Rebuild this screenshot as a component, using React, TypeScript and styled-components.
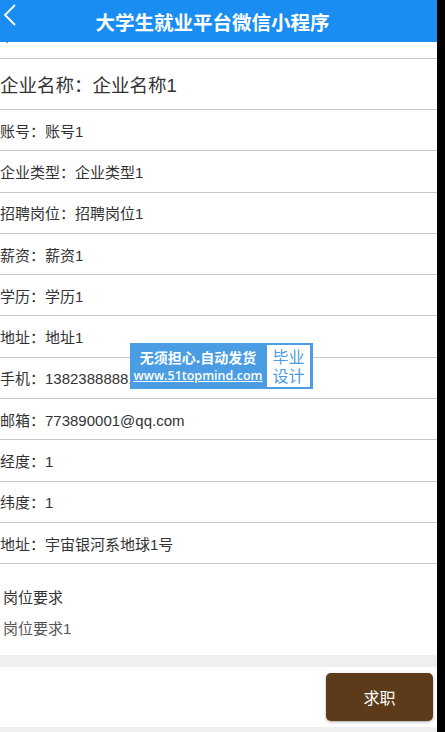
import React from "react";
import styled, { createGlobalStyle } from "styled-components";

const GlobalStyle = createGlobalStyle`
  html, body {
    margin: 0;
    padding: 0;
    background: #000;
  }
  body {
    font-family: "Liberation Sans", "Noto Sans CJK SC", sans-serif;
  }
`;

const Page = styled.div`
  width: 437px;
  height: 732px;
  background: #efefef;
  display: flex;
  flex-direction: column;
  overflow: hidden;
  position: relative;
`;

const Header = styled.div`
  height: 42px;
  flex-shrink: 0;
  background: #1a8df2;
  display: flex;
  align-items: center;
  position: relative;
  .back {
    position: absolute;
    left: 3px;
    top: 4px;
  }
  h1 {
    flex: 1;
    margin: 0 12px 0 0;
    text-align: center;
    color: #fff;
    font-size: 19.5px;
    font-weight: bold;
    font-family: "Noto Sans CJK SC", sans-serif;
  }
`;

const Info = styled.div`
  background: #fff;
  display: flex;
  flex-direction: column;
`;

const ClippedRow = styled.div`
  height: 16px;
  overflow: hidden;
  border-bottom: 1px solid #c9c9c9;
  span {
    display: block;
    margin: -12px 0 0 3px;
    font-size: 15px;
    line-height: 15px;
    color: #a0524a;
  }
`;

const Row = styled.div<{ $big?: boolean }>`
  height: ${(p) => (p.$big ? "50px" : "40.3px")};
  display: flex;
  align-items: center;
  border-bottom: 1px solid #c9c9c9;
  font-size: ${(p) => (p.$big ? "18.5px" : "15px")};
  color: #333;
  white-space: nowrap;
`;

const Requirement = styled.div`
  background: #fff;
  padding: 23px 3px 15px;
  display: flex;
  flex-direction: column;
  gap: 9px;
  .title {
    font-size: 15px;
    color: #333;
    line-height: 22px;
  }
  .desc {
    font-size: 15px;
    color: #555;
    line-height: 22px;
  }
`;

const Gap = styled.div`
  height: 12px;
`;

const BottomBar = styled.div`
  height: 60px;
  background: #fff;
  display: flex;
  justify-content: flex-end;
  align-items: center;
  padding-right: 4px;
`;

const ApplyButton = styled.button`
  width: 107px;
  height: 48px;
  border: none;
  border-radius: 5px;
  background: #5c3b1a;
  color: #fff;
  font-size: 16px;
  font-family: "Noto Sans CJK SC", sans-serif;
  box-shadow: 0 1px 3px rgba(0, 0, 0, 0.35);
`;

const Watermark = styled.div`
  position: absolute;
  left: 130px;
  top: 343px;
  height: 46px;
  display: flex;
  background: #4a9de3;
  font-family: "Noto Sans CJK SC", sans-serif;
  .left {
    width: 136px;
    display: flex;
    flex-direction: column;
    align-items: center;
    justify-content: center;
    color: #fff;
    .slogan {
      font-size: 14px;
      line-height: 19px;
      font-weight: bold;
    }
    .url {
      font-family: "Open Sans", "Liberation Sans", sans-serif;
      font-size: 12.5px;
      line-height: 17px;
      text-decoration: underline;
      font-weight: 600;
    }
  }
  .right {
    width: 43px;
    margin: 2px 3px 2px 1px;
    background: #fff;
    color: #4a9de3;
    font-size: 16px;
    line-height: 19px;
    display: flex;
    flex-direction: column;
    align-items: center;
    justify-content: center;
  }
`;

const rows = [
  "账号：账号1",
  "企业类型：企业类型1",
  "招聘岗位：招聘岗位1",
  "薪资：薪资1",
  "学历：学历1",
  "地址：地址1",
  "手机：13823888881",
  "邮箱：773890001@qq.com",
  "经度：1",
  "纬度：1",
  "地址：宇宙银河系地球1号",
];

const App = () => {
  return (
    <>
      <GlobalStyle />
      <Page>
        <Header>
          <svg className="back" width="14" height="22" viewBox="0 0 14 22">
            <path d="M12 1 L2 11 L12 21" fill="none" stroke="#fff" strokeWidth="1.8" />
          </svg>
          <h1>大学生就业平台微信小程序</h1>
        </Header>
        <Info>
          <ClippedRow>
            <span>¥</span>
          </ClippedRow>
          <Row $big>企业名称：企业名称1</Row>
          {rows.map((r, i) => (
            <Row key={i}>{r}</Row>
          ))}
        </Info>
        <Requirement>
          <div className="title">岗位要求</div>
          <div className="desc">岗位要求1</div>
        </Requirement>
        <Gap />
        <BottomBar>
          <ApplyButton>求职</ApplyButton>
        </BottomBar>
        <Watermark>
          <div className="left">
            <span className="slogan">无须担心.自动发货</span>
            <span className="url">www.51topmind.com</span>
          </div>
          <div className="right">
            <span>毕业</span>
            <span>设计</span>
          </div>
        </Watermark>
      </Page>
    </>
  );
};

export default App;
